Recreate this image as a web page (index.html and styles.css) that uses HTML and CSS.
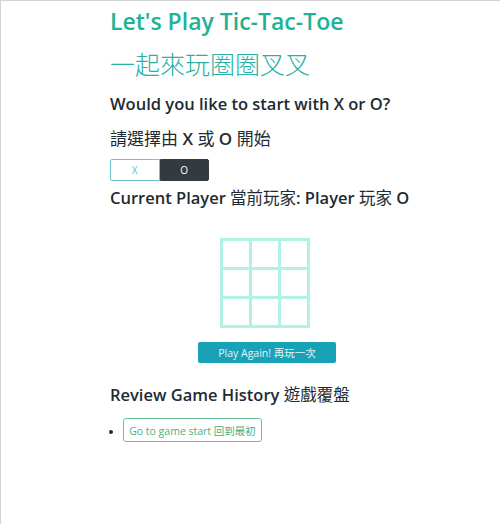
FILE: index.html
```html
<!DOCTYPE html>
<html>
<head>
<meta charset="utf-8">
<link rel="stylesheet" href="styles.css">
</head>
<body>
<div class="page">
  <div class="content">
    <h1 class="title">Let's Play Tic-Tac-Toe</h1>
    <h2 class="subtitle">一起來玩圈圈叉叉</h2>
    <h3 class="question">Would you like to start with X or O?</h3>
    <p class="question-zh">請選擇由 <b>X</b> 或 <b>O</b> 開始</p>
    <div class="toggle">
      <button class="tog tog-x">X</button>
      <button class="tog tog-o">O</button>
    </div>
    <h3 class="current">Current Player <span class="zh">當前玩家</span>: Player <span class="zh">玩家</span> O</h3>
    <div class="board-wrap">
      <div class="board">
        <div class="cell"></div><div class="cell"></div><div class="cell"></div>
        <div class="cell"></div><div class="cell"></div><div class="cell"></div>
        <div class="cell"></div><div class="cell"></div><div class="cell"></div>
      </div>
      <button class="again">Play Again! 再玩一次</button>
    </div>
    <h3 class="history">Review Game History <span class="zh">遊戲覆盤</span></h3>
    <ul class="moves">
      <li><button class="goto">Go to game start 回到最初</button></li>
    </ul>
  </div>
</div>
</body>
</html>
```
FILE: styles.css
```css
html, body {
  margin: 0;
  padding: 0;
  background: #fff;
}
body {
  font-family: "Open Sans", "Noto Sans CJK TC", sans-serif;
  color: #1e2b33;
}
.page {
  border-top: 1px solid #d3d3d3;
  border-left: 1px solid #d3d3d3;
  min-height: 524px;
  box-sizing: border-box;
  padding-left: 109px;
}
.content {
  width: 310px;
}
.title {
  margin: 5px 0 0;
  font-size: 23px;
  font-weight: 600;
  color: #1db394;
  line-height: 30px;
}
.subtitle {
  margin: 11px 0 0;
  font-family: "Noto Sans CJK TC", sans-serif;
  font-weight: 300;
  font-size: 25px;
  color: #28b0a4;
  line-height: 32px;
}
.question {
  margin: 13px 0 0;
  font-size: 16.5px;
  font-weight: 600;
  line-height: 24px;
}
.question-zh {
  margin: 11px 0 0;
  font-size: 17px;
  line-height: 24px;
  font-family: "Open Sans", "Noto Sans CJK TC", sans-serif;
}
.question-zh b { font-weight: 600; }
.zh {
  font-family: "Noto Sans CJK TC", sans-serif;
  font-weight: 400;
}
.toggle {
  display: flex;
  margin-top: 8px;
  width: 99px;
}
.tog {
  flex: 1;
  height: 22px;
  font-family: "Open Sans", sans-serif;
  font-size: 10px;
  padding: 0;
  border: 1px solid #6cc3d0;
  cursor: pointer;
}
.tog-x {
  background: #fff;
  color: #5bbfcc;
  border-radius: 2px 0 0 2px;
}
.tog-o {
  background: #343a40;
  color: #fff;
  border-color: #343a40;
  border-radius: 0 2px 2px 0;
}
.current {
  margin: 4px 0 0;
  font-size: 16.5px;
  font-weight: 600;
  line-height: 24px;
}
.board-wrap {
  display: flex;
  flex-direction: column;
  align-items: center;
  margin-top: 28px;
}
.board {
  display: grid;
  grid-template-columns: repeat(3, 26px);
  grid-template-rows: repeat(3, 26px);
  gap: 3px;
  padding: 3px;
  background: #b3f0e5;
}
.cell { background: #fff; }
.again {
  margin-top: 14px;
  margin-left: 4px;
  width: 138px;
  height: 21px;
  padding: 0;
  border: none;
  border-radius: 2px;
  background: #17a2b8;
  color: #e8f4f6;
  font-family: "Open Sans", "Noto Sans CJK TC", sans-serif;
  font-size: 10.5px;
}
.history {
  margin: 19px 0 0;
  font-size: 16.5px;
  font-weight: 600;
  line-height: 24px;
}
.moves {
  margin: 11px 0 0;
  padding-left: 13px;
  font-size: 10px;
}
.goto {
  height: 24px;
  width: 139px;
  padding: 0;
  background: #fff;
  border: 1px solid #6cc196;
  border-radius: 3px;
  color: #4caf7a;
  font-family: "Open Sans", "Noto Sans CJK TC", sans-serif;
  font-size: 10.5px;
}
```
